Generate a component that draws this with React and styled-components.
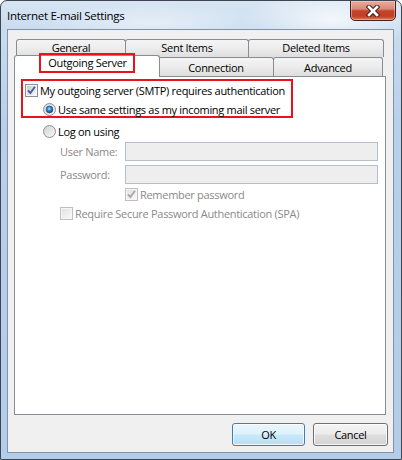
import React from "react";
import styled, { createGlobalStyle } from "styled-components";

const GlobalStyle = createGlobalStyle`
  html, body {
    margin: 0;
    padding: 0;
    background: #ffffff;
  }
  body {
    font-family: "Open Sans", "Noto Sans", sans-serif;
    font-size: 11px;
    letter-spacing: -0.3px;
    color: #000;
  }
`;

// Window frame (Aero glass)
const Window = styled.div`
  width: 402px;
  height: 460px;
  box-sizing: border-box;
  border: 1px solid #3d4652;
  border-radius: 7px 7px 0 0;
  background: radial-gradient(ellipse 90px 30px at 330px 18px, rgba(255, 255, 255, 0.75), rgba(255, 255, 255, 0) 100%),
    radial-gradient(ellipse 120px 20px at 150px 22px, rgba(255, 255, 255, 0.5), rgba(255, 255, 255, 0) 100%),
    linear-gradient(180deg, #d7e5f3 0%, #c9dcef 28px, #b8d0ea 120px, #b3cce8 100%);
  display: flex;
  flex-direction: column;
  overflow: hidden;
`;

const TitleBar = styled.div`
  height: 28px;
  display: flex;
  justify-content: space-between;
  align-items: flex-start;
`;

const Title = styled.span`
  margin: 7px 0 0 6px;
  line-height: 16px;
  font-size: 11.5px;
  color: #000;
`;

const CloseButton = styled.div`
  width: 46px;
  height: 21px;
  margin: -1px 5px 0 0;
  box-sizing: border-box;
  border: 1px solid #45201a;
  border-radius: 0 0 5px 5px;
  background: linear-gradient(180deg, #e8ab9e 0%, #d98a78 42%, #c2442a 52%, #c33f25 80%, #dc7a55 100%);
  box-shadow: inset 0 0 0 1px rgba(255, 220, 210, 0.45);
  display: flex;
  align-items: center;
  justify-content: center;
`;

const Client = styled.div`
  width: 387px;
  height: 424px;
  margin-left: 6px;
  box-sizing: border-box;
  border: 1px solid #8393a7;
  background: #f0f0f0;
  padding: 9px 0 0 6px;
  display: flex;
  flex-direction: column;
`;

// Tabs
const TabControl = styled.div`
  width: 372px;
  display: flex;
  flex-direction: column;
`;

const TabRow = styled.div`
  display: flex;
  align-items: flex-end;
  height: ${(p) => p.$h}px;
  padding-left: 2px;
`;

const Tab = styled.div`
  width: ${(p) => p.$w}px;
  height: 100%;
  box-sizing: border-box;
  border: 1px solid #898c95;
  border-bottom: none;
  border-radius: 3px 3px 0 0;
  background: linear-gradient(180deg, #f4f4f4 0%, #ececec 50%, #dedede 100%);
  margin-left: -1px;
  display: flex;
  align-items: center;
  justify-content: center;
  line-height: 13px;
  padding-bottom: ${(p) => p.$pb || 0}px;
  &:first-child {
    margin-left: 0;
  }
`;

const ActiveTab = styled.div`
  position: relative;
  z-index: 1;
  width: ${(p) => p.$w}px;
  height: 22px;
  margin: 0 -1px -1px -2px;
  box-sizing: border-box;
  border: 1px solid #898c95;
  border-bottom: none;
  border-radius: 3px 3px 0 0;
  background: #ffffff;
  display: flex;
  justify-content: center;
  align-items: flex-start;
  align-self: flex-end;
`;

const Marked = styled.span`
  border: 2px solid #e8131c;
  margin-top: -3px;
  padding: 1px 6px 1px 7px;
  line-height: 14px;
`;

const Panel = styled.div`
  height: 339px;
  box-sizing: border-box;
  border: 1px solid #898c95;
  background: #ffffff;
  padding: 2px 0 0 6px;
  display: flex;
  flex-direction: column;
`;

const RedGroup = styled.div`
  width: 272px;
  height: 39px;
  box-sizing: border-box;
  border: 2px solid #e8131c;
  padding-top: 2px;
  display: flex;
  flex-direction: column;
  gap: 4px;
`;

const Row = styled.div`
  display: flex;
  align-items: center;
  height: 16px;
  gap: 2px;
  padding-left: ${(p) => p.$indent || 0}px;
  margin-top: ${(p) => p.$top || 0}px;
  color: ${(p) => (p.$disabled ? "#8a8a8a" : "#000")};
  white-space: nowrap;
  svg {
    flex: none;
  }
`;

const FieldRow = styled.div`
  display: flex;
  align-items: center;
  padding-left: 39px;
  margin-top: ${(p) => p.$top}px;
`;

const FieldLabel = styled.span`
  width: 65px;
  color: #8a8a8a;
`;

const TextBox = styled.div`
  width: 253px;
  height: 19px;
  box-sizing: border-box;
  border: 1px solid #b3bfcb;
  background: #eeeeee;
`;

const Footer = styled.div`
  display: flex;
  justify-content: flex-end;
  gap: 8px;
  margin-top: 8px;
  padding-right: 5px;
`;

const Button = styled.div`
  width: ${(p) => p.$w}px;
  height: 23px;
  box-sizing: border-box;
  border: 1px solid ${(p) => (p.$default ? "#3c7fb1" : "#707070")};
  border-radius: 3px;
  background: ${(p) =>
    p.$default
      ? "linear-gradient(180deg, #eaf6fd 0%, #dff2fc 48%, #c9e9fa 52%, #b5def5 100%)"
      : "linear-gradient(180deg, #f4f4f4 0%, #ececec 48%, #dfdfdf 52%, #d2d2d2 100%)"};
  box-shadow: inset 0 0 0 1px rgba(255, 255, 255, 0.75);
  display: flex;
  align-items: center;
  justify-content: center;
`;

// Icons
const CloseGlyph = () => (
  <svg width="14" height="12" viewBox="0 0 14 12">
    <path d="M3 2 L11 10 M11 2 L3 10" stroke="#4a1f18" strokeWidth="4.6" strokeLinecap="square" />
    <path d="M3 2 L11 10 M11 2 L3 10" stroke="#ffffff" strokeWidth="2.6" strokeLinecap="square" />
  </svg>
);

const CheckBox = ({ checked, disabled }) => (
  <svg width="13" height="13" viewBox="0 0 13 13">
    <defs>
      <linearGradient id="cbOn" x1="0" y1="0" x2="1" y2="1">
        <stop offset="0" stopColor="#c5cbd3" />
        <stop offset="1" stopColor="#f7f8f9" />
      </linearGradient>
      <linearGradient id="cbOff" x1="0" y1="0" x2="1" y2="1">
        <stop offset="0" stopColor="#e2e2e2" />
        <stop offset="1" stopColor="#f8f8f8" />
      </linearGradient>
    </defs>
    <rect x="0.5" y="0.5" width="12" height="12" fill="#f6f6f6" stroke={disabled ? "#c0c0c0" : "#8e8f8f"} />
    <rect x="2" y="2" width="9" height="9" fill={disabled ? "url(#cbOff)" : "url(#cbOn)"} />
    {checked && (
      <path
        d="M3 6.3 L5.4 9 L10 2.8"
        fill="none"
        stroke={disabled ? "#a9a9a9" : "#4b5e9c"}
        strokeWidth="1.9"
      />
    )}
  </svg>
);

const RadioButton = ({ checked }) => (
  <svg width="13" height="13" viewBox="0 0 13 13">
    <defs>
      <linearGradient id="rbBg" x1="0" y1="0" x2="1" y2="1">
        <stop offset="0" stopColor="#cfd1d4" />
        <stop offset="1" stopColor="#f9f9f9" />
      </linearGradient>
      <radialGradient id="rbDot" cx="45%" cy="40%" r="60%">
        <stop offset="0" stopColor="#b8e4fc" />
        <stop offset="0.45" stopColor="#2f8fd6" />
        <stop offset="1" stopColor="#0e3f78" />
      </radialGradient>
    </defs>
    <circle cx="6.5" cy="6.5" r="6" fill="url(#rbBg)" stroke="#8e8f8f" />
    {checked && <circle cx="6.5" cy="6.5" r="3.4" fill="url(#rbDot)" stroke="#1d4f86" strokeWidth="0.6" />}
  </svg>
);

const App = () => {
  return (
    <>
      <GlobalStyle />
      <Window>
        <TitleBar>
          <Title>Internet E-mail Settings</Title>
          <CloseButton>
            <CloseGlyph />
          </CloseButton>
        </TitleBar>
        <Client>
          <TabControl>
            <TabRow $h={18}>
              <Tab $w={110} $pb={2}>General</Tab>
              <Tab $w={124} $pb={2}>Sent Items</Tab>
              <Tab $w={136} $pb={2}>Deleted Items</Tab>
            </TabRow>
            <TabRow $h={19}>
              <ActiveTab $w={146}>
                <Marked>Outgoing Server</Marked>
              </ActiveTab>
              <Tab $w={116}>Connection</Tab>
              <Tab $w={110}>Advanced</Tab>
            </TabRow>
            <Panel>
              <RedGroup>
                <Row $indent={2}>
                  <CheckBox checked />
                  <span>My outgoing server (SMTP) requires authentication</span>
                </Row>
                <Row $indent={20}>
                  <RadioButton checked />
                  <span>Use same settings as my incoming mail server</span>
                </Row>
              </RedGroup>
              <Row $indent={22} $top={5}>
                <RadioButton />
                <span>Log on using</span>
              </Row>
              <FieldRow $top={3}>
                <FieldLabel>User Name:</FieldLabel>
                <TextBox />
              </FieldRow>
              <FieldRow $top={4}>
                <FieldLabel>Password:</FieldLabel>
                <TextBox />
              </FieldRow>
              <Row $indent={104} $top={2} $disabled>
                <CheckBox checked disabled />
                <span>Remember password</span>
              </Row>
              <Row $indent={39} $top={3} $disabled>
                <CheckBox disabled />
                <span>Require Secure Password Authentication (SPA)</span>
              </Row>
            </Panel>
          </TabControl>
          <Footer>
            <Button $w={73} $default>
              OK
            </Button>
            <Button $w={75}>Cancel</Button>
          </Footer>
        </Client>
      </Window>
    </>
  );
};

export default App;
